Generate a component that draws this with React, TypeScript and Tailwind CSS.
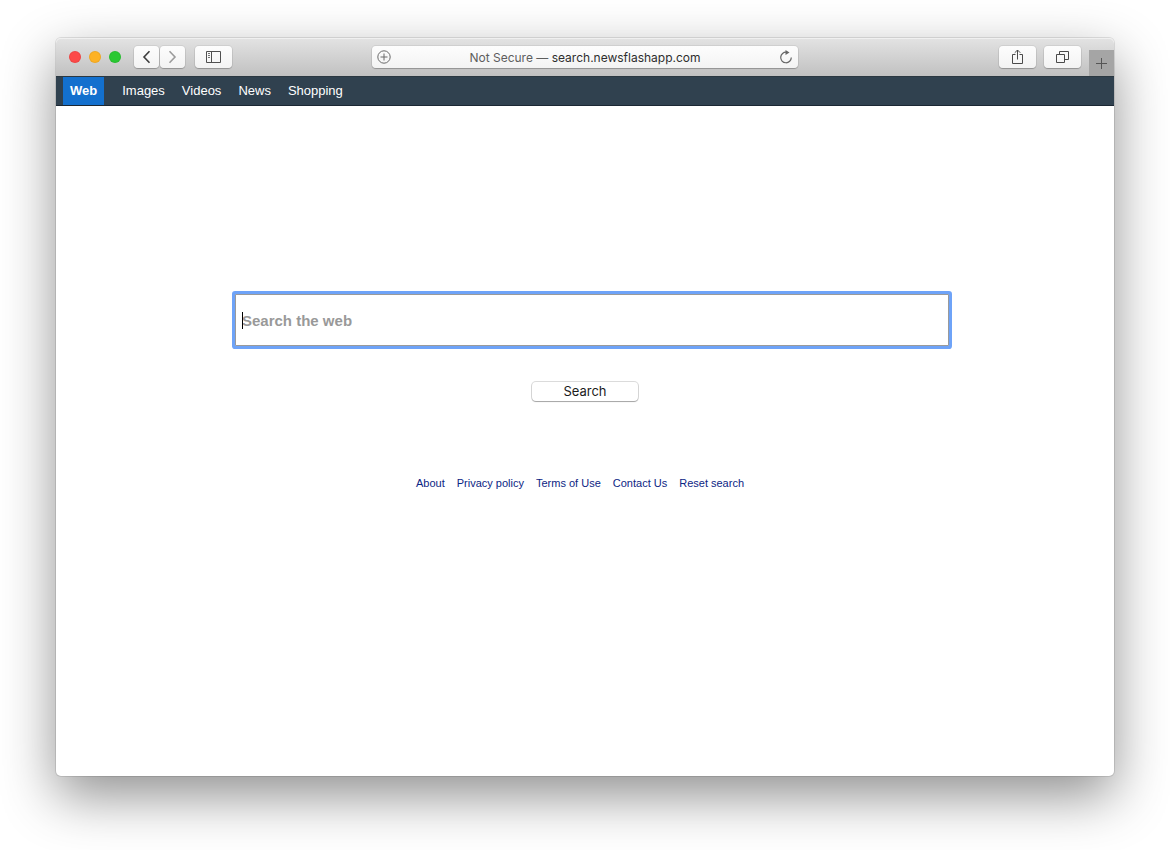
import React from 'react';

const toolButton =
  'flex h-[22px] items-center justify-center rounded bg-linear-to-b from-[#fdfdfd] to-[#f3f3f3] shadow-[0_0_0_1px_rgba(0,0,0,0.06),0_1px_1px_rgba(0,0,0,0.22)]';

function Toolbar() {
  return (
    <header className="grid h-[38px] shrink-0 grid-cols-[1fr_minmax(0,426px)_1fr] items-center rounded-t-[5px] bg-linear-to-b from-[#e3e3e3] to-[#c1c1c1] shadow-[inset_0_1px_0_#f0f0f0]">
      <div className="flex items-center pl-[13px]">
        <div className="flex gap-2">
          <button aria-label="Close" className="size-3 rounded-full bg-[#fc4948] shadow-[inset_0_0_0_1px_rgba(0,0,0,0.06)]" />
          <button aria-label="Minimize" className="size-3 rounded-full bg-[#fdb225] shadow-[inset_0_0_0_1px_rgba(0,0,0,0.06)]" />
          <button aria-label="Zoom" className="size-3 rounded-full bg-[#2ac833] shadow-[inset_0_0_0_1px_rgba(0,0,0,0.06)]" />
        </div>
        <div className="ml-[13px] flex gap-px">
          <button aria-label="Back" className={`${toolButton} w-[25px]`}>
            <svg width="10" height="14" viewBox="0 0 10 14" fill="none" stroke="#3c3c3c" strokeWidth="1.6">
              <path d="M7.5 1.2 2 7l5.5 5.8" />
            </svg>
          </button>
          <button aria-label="Forward" className={`${toolButton} w-[25px]`}>
            <svg width="10" height="14" viewBox="0 0 10 14" fill="none" stroke="#9b9b9b" strokeWidth="1.6">
              <path d="M1.5 1.200 7 7l-5.500 5.800" />
            </svg>
          </button>
        </div>
        <button aria-label="Show sidebar" className={`${toolButton} ml-[10px] w-[37px]`}>
          <svg width="15" height="12" viewBox="0 0 15 12" fill="none" stroke="#505050">
            <path d="M.5.5h14v11H.5zM5.500.5v11" />
            <path d="M2 2.500h2M2 4.500h2M2 6.500h2" strokeWidth=".8" />
          </svg>
        </button>
      </div>

      <div className={`${toolButton} relative px-[26px]`}>
        <button aria-label="Add bookmark" className="absolute left-[5px] top-[4px]">
          <svg width="14" height="14" viewBox="0 0 14 14" fill="none" stroke="#6a6a6a">
            <circle cx="7" cy="7" r="6.200" />
            <path d="M7 3.500v7M3.500 7h7" />
          </svg>
        </button>
        <p className="truncate pt-px font-[Inter,sans-serif] text-[12px] leading-[22px] text-[#5e5e5e]">
          Not Secure — <span className="text-[#2e2e2e]">search.newsflashapp.com</span>
        </p>
        <button aria-label="Reload" className="absolute right-[5px] top-[4px]">
          <svg width="14" height="14" viewBox="0 0 14 14" fill="none" stroke="#666" strokeWidth="1.200">
            <path d="M7.500 2.200A5.300 5.300 0 1 0 12.300 7.500" />
            <path d="M6.500 0v5l4-2.500z" fill="#666" stroke="none" />
          </svg>
        </button>
      </div>

      <div className="flex h-full items-center justify-end gap-2">
        <button aria-label="Share" className={`${toolButton} w-[37px]`}>
          <svg width="13" height="16" viewBox="0 0 13 16" fill="none" stroke="#4a4a4a">
            <path d="M4.500 5.500h-3v9h10v-9h-3M6.500 10.500V1M3.700 3.800 6.500 1l2.800 2.800" />
          </svg>
        </button>
        <button aria-label="Show tabs" className={`${toolButton} w-[37px]`}>
          <svg width="13" height="12" viewBox="0 0 13 12" fill="none" stroke="#4a4a4a">
            <path d="M.5 3.500h8v8h-8zM3.500 3.500v-3h9v8h-4" />
          </svg>
        </button>
        <button aria-label="New tab" className="flex h-[26px] w-[25px] items-center justify-center self-end bg-[#a5a5a5]">
          <svg width="11" height="11" viewBox="0 0 11 11" stroke="#555">
            <path d="M5.500 0v11M0 5.500h11" />
          </svg>
        </button>
      </div>
    </header>
  );
}

function NavBar() {
  return (
    <nav className="flex h-[30px] shrink-0 border-y border-b-[#1b2733] border-t-[#2b3841] bg-[#30414f] pl-[7px] text-[13px] leading-[27px] text-white">
      <a href="#web" className="mr-[18px] bg-[#1370ce] px-[7px] font-bold">Web</a>
      <div className="flex gap-[17px]">
        <a href="#images">Images</a>
        <a href="#videos">Videos</a>
        <a href="#news">News</a>
        <a href="#shopping">Shopping</a>
      </div>
    </nav>
  );
}

const links = ['About', 'Privacy policy', 'Terms of Use', 'Contact Us', 'Reset search'];

export default function App() {
  return (
    <div className="flex min-h-screen bg-white px-14 pb-[74px] pt-[38px] font-['Liberation_Sans',Arial,sans-serif]">
      <div className="flex min-w-0 flex-1 flex-col rounded-[5px] bg-white shadow-[0_0_0_1px_rgba(0,0,0,0.1),0_20px_54px_rgba(0,0,0,0.44)]">
        <Toolbar />
        <NavBar />
        <main className="flex flex-col items-center px-6 pt-[188px]">
          <form className="flex w-full max-w-[700px] flex-col items-center" onSubmit={(e) => e.preventDefault()}>
            <div className="relative -mr-[14px] w-[calc(100%+14px)] self-start">
              <input
                type="text"
                aria-label="Search the web"
                placeholder="Search the web"
                className="block h-[52px] w-full border border-[#9a9a9a] bg-white px-[6px] text-[15px] font-bold text-black shadow-[0_0_0_3px_#6ea3f8] outline-none rounded-[1px] placeholder:text-[#999999]"
              />
              <span className="absolute left-[7px] top-[18px] h-[17px] w-px bg-black" />
            </div>
            <button
              type="submit"
              className="mt-9 h-[19px] w-[106px] rounded bg-white font-[Inter,sans-serif] text-[13px] leading-[19px] text-[#1c1c1c] shadow-[0_0_0_1px_rgba(0,0,0,0.14),0_1px_1px_rgba(0,0,0,0.25)]"
            >
              Search
            </button>
          </form>
          <footer className="mt-[74px] flex gap-3 pr-[10px] text-[11px] leading-4 text-[#0c2584]">
            {links.map((label) => (
              <a key={label} href="#info">{label}</a>
            ))}
          </footer>
        </main>
      </div>
    </div>
  );
}
